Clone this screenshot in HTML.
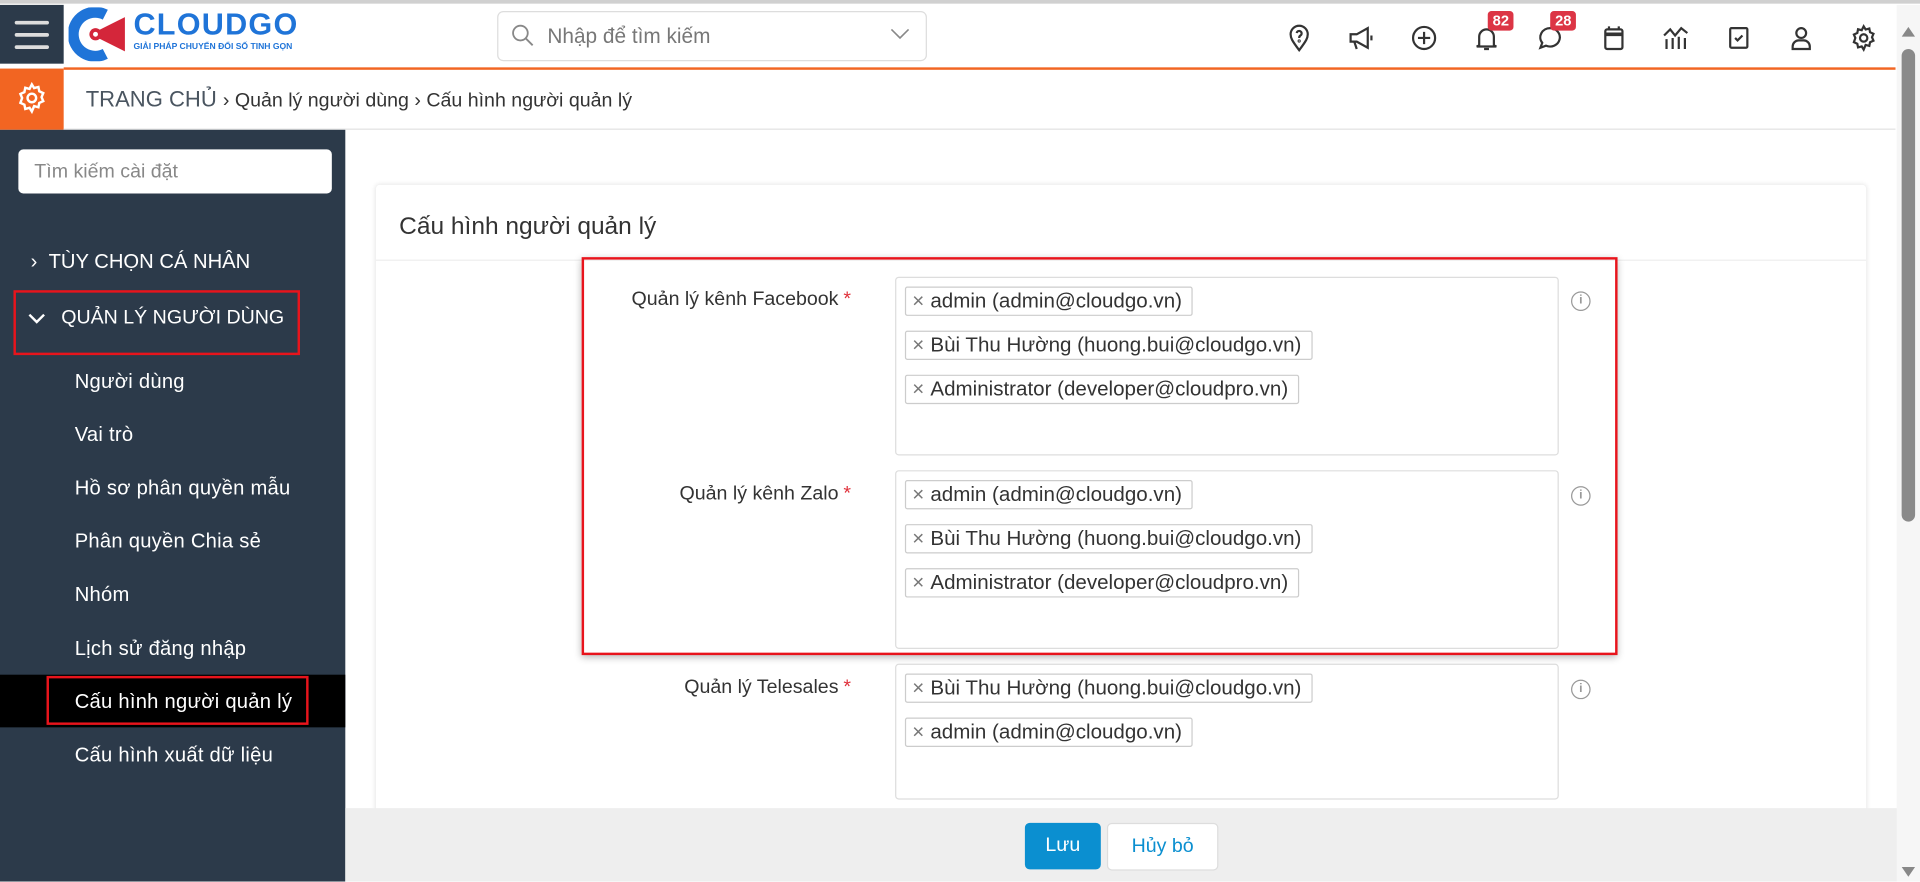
<!DOCTYPE html>
<html><head><meta charset="utf-8">
<style>
html,body{margin:0;padding:0;width:1920px;height:882px;overflow:hidden;background:#fff}
#w{position:absolute;left:0;top:0;width:1568px;height:720px;transform:scale(1.22449);transform-origin:0 0;font-family:"Liberation Sans","DejaVu Sans",sans-serif;overflow:hidden;background:#fff}
.a{position:absolute}
.ic{position:absolute;top:19px;width:24px;height:24px}
.badge{position:absolute;top:9px;height:16px;padding:0 4px;background:#dc3545;color:#fff;font-size:12px;font-weight:bold;line-height:16px;border-radius:3px}
.side{position:absolute;left:0;top:106px;width:282px;height:614px;background:#2c3a4a}
.mi{position:absolute;left:61px;color:#fff;font-size:16.5px;letter-spacing:0.2px}
.tag{position:absolute;left:7px;height:22px;border:1px solid #ccc;border-radius:2px;background:#fff;line-height:22px;color:#333;padding:0 8px 0 5px;white-space:nowrap;font-family:"Liberation Sans",sans-serif;font-size:16.8px}
.tag span{color:#777;margin-right:5px}
.fld{position:absolute;left:731px;width:540px;border:1px solid #ddd;border-radius:3px;background:#fff}
.lbl{position:absolute;right:873px;font-size:16px;color:#333;text-align:right;white-space:nowrap}
.lbl b{color:#e0303a;font-weight:normal;margin-left:4px}
.info{position:absolute;left:1283px;width:14px;height:14px;border:1.5px solid #999;border-radius:50%;color:#999;font-size:10px;text-align:center;line-height:14px;font-weight:bold}
</style></head><body><div id="w">
<div class="a" style="left:0;top:0;width:1568px;height:3px;background:#d0d0d0"></div>
<div class="a" style="left:0;top:4px;width:52px;height:48px;background:#2c3a4a"></div>
<div class="a" style="left:12px;top:17px;width:28px;height:3px;background:#ddd;border-radius:2px"></div>
<div class="a" style="left:12px;top:27px;width:28px;height:3px;background:#ddd;border-radius:2px"></div>
<div class="a" style="left:12px;top:37px;width:28px;height:3px;background:#ddd;border-radius:2px"></div>
<svg class="a" style="left:56px;top:6px" width="52" height="44" viewBox="0 0 52 44">
<path d="M30 6 A18 18 0 1 0 30 38" fill="none" stroke="#1f74d8" stroke-width="9"/>
<path d="M18 22 L46 8 L46 36 Z" fill="#d4263a"/>
<circle cx="22" cy="22" r="5" fill="#d4263a"/><circle cx="22" cy="22" r="2" fill="#fff"/>
</svg>
<div class="a" style="left:109px;top:6px;font-size:25px;font-weight:bold;color:#1f74d8;letter-spacing:1px">CLOUDGO</div>
<div class="a" style="left:109px;top:35px;font-size:7px;font-weight:bold;color:#1f74d8">GIẢI PHÁP CHUYỂN ĐỔI SỐ TINH GỌN</div>
<div class="a" style="left:406px;top:9px;width:349px;height:39px;border:1px solid #ddd;border-radius:5px;background:#fff"></div>
<svg class="a" style="left:417px;top:19px" width="20" height="20" viewBox="0 0 20 20"><circle cx="8" cy="8" r="6" fill="none" stroke="#888" stroke-width="1.5"/><path d="M12.5 12.5 L18 18" stroke="#888" stroke-width="1.5"/></svg>
<div class="a" style="left:447px;top:20px;font-size:17px;color:#777">Nhập để tìm kiếm</div>
<svg class="a" style="left:727px;top:23px" width="16" height="10" viewBox="0 0 16 10"><path d="M1 1 L8 8 L15 1" fill="none" stroke="#888" stroke-width="1.3"/></svg>
<svg class="ic" style="left:1049px" viewBox="0 0 24 24" fill="none" stroke="#333" stroke-width="1.8"><path d="M12 22 C6 14 5 12 5 9 A7 7 0 0 1 19 9 C19 12 18 14 12 22Z"/><path d="M10 8 a2 2 0 1 1 3 2 c-1 .6-1 1-1 2"/><circle cx="12" cy="14.5" r=".4"/></svg>
<svg class="ic" style="left:1100px" viewBox="0 0 24 24" fill="none" stroke="#333" stroke-width="1.8"><path d="M3 9 h5 l9-5 v16 l-9-5 H3 Z"/><path d="M6 15 l2 6"/><path d="M20 10 v4"/></svg>
<svg class="ic" style="left:1151px" viewBox="0 0 24 24" fill="none" stroke="#333" stroke-width="1.8"><circle cx="12" cy="12" r="9"/><path d="M12 7 v10 M7 12 h10"/></svg>
<svg class="ic" style="left:1202px" viewBox="0 0 24 24" fill="none" stroke="#333" stroke-width="1.8"><path d="M6 18 V11 a6 6 0 0 1 12 0 v7 l2 1 H4 Z"/><path d="M10 21 h4"/></svg>
<svg class="ic" style="left:1254px" viewBox="0 0 24 24" fill="none" stroke="#333" stroke-width="1.8"><path d="M12 4 a8 7.5 0 1 1 -3.5 14.3 L4 20 l1.5-4 A8 7.5 0 0 1 12 4Z"/></svg>
<svg class="ic" style="left:1306px" viewBox="0 0 24 24" fill="none" stroke="#333" stroke-width="1.8"><rect x="5" y="5" width="14" height="16" rx="1.5"/><path d="M5 9 h14" stroke-width="3"/><path d="M8 2.5 v3 M16 2.5 v3"/></svg>
<svg class="ic" style="left:1357px" viewBox="0 0 24 24" fill="none" stroke="#333" stroke-width="1.8"><path d="M2 10 l5-5 4 5 5-6 5 4"/><path d="M4 13 v8 M9 12 v9 M14 11 v10 M19 12 v9"/></svg>
<svg class="ic" style="left:1408px" viewBox="0 0 24 24" fill="none" stroke="#333" stroke-width="1.8"><rect x="5" y="4" width="14" height="16" rx="1"/><path d="M9 12 l2 2 4-4"/></svg>
<svg class="ic" style="left:1459px" viewBox="0 0 24 24" fill="none" stroke="#333" stroke-width="1.8"><circle cx="12" cy="8" r="4"/><path d="M5 21 v-2 a5 5 0 0 1 5-5 h4 a5 5 0 0 1 5 5 v2 Z"/></svg>
<svg class="ic" style="left:1510px" viewBox="0 0 24 24" fill="none" stroke="#333" stroke-width="1.8"><circle cx="12" cy="12" r="3"/><path d="M12 2.5 l1.6 2.6 3-.8 .6 3 2.8 1.3-1.2 2.8 1.2 2.8-2.8 1.3-.6 3-3-.8L12 21.5l-1.6-2.6-3 .8-.6-3-2.8-1.3L5.2 12 4 9.2l2.8-1.3.6-3 3 .8Z"/></svg>
<div class="badge" style="left:1215px">82</div>
<div class="badge" style="left:1266px">28</div>
<div class="a" style="left:52px;top:55px;width:1496px;height:1.5px;background:#f26522"></div>
<div class="a" style="left:0;top:56px;width:52px;height:50px;background:#f26522"></div>
<svg class="a" style="left:12px;top:66px" width="28" height="28" viewBox="0 0 24 24" fill="none" stroke="#fff" stroke-width="1.7"><circle cx="12" cy="12" r="3"/><path d="M12 2.5 l1.6 2.6 3-.8 .6 3 2.8 1.3-1.2 2.8 1.2 2.8-2.8 1.3-.6 3-3-.8L12 21.5l-1.6-2.6-3 .8-.6-3-2.8-1.3L5.2 12 4 9.2l2.8-1.3.6-3 3 .8Z"/></svg>
<div class="a" style="left:70px;top:71px;font-size:18px;color:#4a5560;white-space:nowrap">TRANG CHỦ <span style="font-size:16px;color:#333">›&nbsp;Quản lý người dùng ›&nbsp;Cấu hình người quản lý</span></div>
<div class="a" style="left:52px;top:105px;width:1496px;height:1px;background:#e2e2e2"></div>
<div class="side"></div>
<div class="a" style="left:15px;top:122px;width:256px;height:36px;background:#fff;border-radius:4px"></div>
<div class="a" style="left:28px;top:132px;font-size:16px;color:#888">Tìm kiếm cài đặt</div>
<div class="a" style="left:25px;top:205px;color:#fff;font-size:16.5px">›&nbsp;&nbsp;TÙY CHỌN CÁ NHÂN</div>
<svg class="a" style="left:22px;top:255px" width="16" height="10" viewBox="0 0 16 10"><path d="M2 2 L8 8 L14 2" fill="none" stroke="#fff" stroke-width="2"/></svg>
<div class="a" style="left:50px;top:251px;color:#fff;font-size:16px">QUẢN LÝ NGƯỜI DÙNG</div>
<div class="a" style="left:11px;top:237px;width:234px;height:53px;border:2px solid #e8141c;box-sizing:border-box"></div>
<div class="mi" style="top:303px">Người dùng</div>
<div class="mi" style="top:346px">Vai trò</div>
<div class="mi" style="top:390px">Hồ sơ phân quyền mẫu</div>
<div class="mi" style="top:433px">Phân quyền Chia sẻ</div>
<div class="mi" style="top:477px">Nhóm</div>
<div class="mi" style="top:521px">Lịch sử đăng nhập</div>
<div class="a" style="left:0;top:551px;width:282px;height:43px;background:#000"></div>
<div class="mi" style="top:564px">Cấu hình người quản lý</div>
<div class="a" style="left:38px;top:552px;width:214px;height:40px;border:2px solid #e8141c;box-sizing:border-box"></div>
<div class="mi" style="top:608px">Cấu hình xuất dữ liệu</div>
<div class="a" style="left:307px;top:151px;width:1217px;height:520px;background:#fff;box-shadow:0 0 4px rgba(0,0,0,.12);border-radius:3px"></div>
<div class="a" style="left:326px;top:174px;font-size:20px;color:#333">Cấu hình người quản lý</div>
<div class="a" style="left:307px;top:212px;width:1217px;height:1px;background:#eee"></div>

<div class="lbl" style="top:236px">Quản lý kênh Facebook<b>*</b></div>
<div class="fld" style="top:226px;height:144px">
<div class="tag" style="top:7px"><span>×</span>admin (admin@cloudgo.vn)</div>
<div class="tag" style="top:43px"><span>×</span>Bùi Thu Hường (huong.bui@cloudgo.vn)</div>
<div class="tag" style="top:79px"><span>×</span>Administrator (developer@cloudpro.vn)</div>
</div>
<div class="info" style="top:238px">i</div>

<div class="lbl" style="top:395px">Quản lý kênh Zalo<b>*</b></div>
<div class="fld" style="top:384px;height:144px">
<div class="tag" style="top:7px"><span>×</span>admin (admin@cloudgo.vn)</div>
<div class="tag" style="top:43px"><span>×</span>Bùi Thu Hường (huong.bui@cloudgo.vn)</div>
<div class="tag" style="top:79px"><span>×</span>Administrator (developer@cloudpro.vn)</div>
</div>
<div class="info" style="top:397px">i</div>

<div class="lbl" style="top:553px">Quản lý Telesales<b>*</b></div>
<div class="fld" style="top:542px;height:109px">
<div class="tag" style="top:7px"><span>×</span>Bùi Thu Hường (huong.bui@cloudgo.vn)</div>
<div class="tag" style="top:43px"><span>×</span>admin (admin@cloudgo.vn)</div>
</div>
<div class="info" style="top:555px">i</div>

<div class="a" style="left:475px;top:210px;width:846px;height:325px;border:2px solid #e8141c;box-sizing:border-box;box-shadow:0 2px 6px rgba(0,0,0,.3)"></div>
<div class="a" style="left:282px;top:660px;width:1268px;height:60px;background:#eee"></div>
<div class="a" style="left:837px;top:672px;width:62px;height:38px;background:#0b8fd0;border-radius:4px;color:#fff;font-size:16px;text-align:center;line-height:38px">Lưu</div>
<div class="a" style="left:904px;top:672px;width:89px;height:37px;background:#fff;border:1px solid #ddd;border-radius:4px;color:#0b8fd0;font-size:16px;text-align:center;line-height:37px">Hủy bỏ</div>
<div class="a" style="left:1549px;top:4px;width:19px;height:716px;background:#f6f6f6"></div>
<div class="a" style="left:1553px;top:40px;width:11px;height:386px;background:#8a8a8a;border-radius:6px"></div>
<svg class="a" style="left:1553px;top:22px" width="11" height="8"><path d="M0 8 L5.5 0 L11 8Z" fill="#888"/></svg>
<svg class="a" style="left:1553px;top:708px" width="11" height="8"><path d="M0 0 L5.5 8 L11 0Z" fill="#888"/></svg>
</div></body></html>
